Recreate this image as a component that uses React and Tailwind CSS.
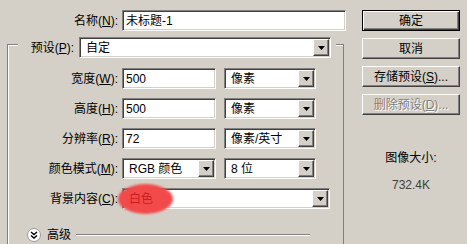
import React from "react"

const sunken =
  "bg-white border border-t-[#808080] border-l-[#808080] border-r-white border-b-white shadow-[inset_1px_1px_0_#404040,inset_-1px_-1px_0_#d4d0c8]"

function Label({ text, hot, rest = "):", className = "" }) {
  return (
    <div className={"text-right whitespace-nowrap " + className}>
      {text}(<span className="underline">{hot}</span>{rest}
    </div>
  )
}

function Input({ value, width }) {
  return (
    <div className={"h-[21px] flex items-center pl-[3px] " + sunken} style={{ width }}>
      {value}
    </div>
  )
}

function Arrow() {
  return (
    <div className="w-[16px] h-[17px] mt-[1px] mr-[1px] flex items-center justify-center bg-[#d4d0c8] border border-t-white border-l-white border-r-[#404040] border-b-[#404040] shadow-[inset_-1px_-1px_0_#808080]">
      <svg width="7" height="4" viewBox="0 0 7 4">
        <polygon points="0,0 7,0 3.5,4" fill="#000" />
      </svg>
    </div>
  )
}

function Select({ value, width, children }) {
  return (
    <div className={"h-[21px] flex items-start relative " + sunken} style={{ width }}>
      {children}
      <div className="flex-1 h-full flex items-center pl-[6px] relative z-10">{value}</div>
      <Arrow />
    </div>
  )
}

function Button({ children, def, disabled }) {
  const base =
    "w-[98px] h-[21px] flex items-center justify-center bg-[#d4d0c8] whitespace-nowrap"
  const edge = def
    ? " border border-black shadow-[inset_1px_1px_0_#fff,inset_-1px_-1px_0_#404040,inset_-2px_-2px_0_#808080]"
    : " border border-t-white border-l-white border-r-[#404040] border-b-[#404040] shadow-[inset_-1px_-1px_0_#808080]"
  return (
    <div className={base + edge + (disabled ? " text-[#808080] [text-shadow:1px_1px_0_#fff]" : "")}>
      {children}
    </div>
  )
}

export default function App() {
  return (
    <div className="w-[467px] h-[244px] bg-[#d4d0c8] flex overflow-hidden text-[12px] leading-none text-black font-['Liberation_Sans','Noto_Sans_CJK_SC',sans-serif]">
      {/* left side */}
      <div className="w-[350px] flex flex-col">
        <div className="mt-[10px] flex items-center h-[21px]">
          <Label text="名称" hot="N" className="w-[118px]" />
          <div className="ml-[4px]">
            <Input value="未标题-1" width={224} />
          </div>
        </div>

        <div className="mt-[13px] ml-[7px] w-[337px] flex-1 border-t border-l border-r border-[#808080] shadow-[inset_1px_1px_0_#fff] flex flex-col">
          {/* preset row sits on the frame */}
          <div className="-mt-[8px] ml-[10px] w-[318px] pl-[7px] bg-[#d4d0c8] flex items-center h-[21px]">
            <Label text="预设" hot="P" className="w-[49px]" />
            <div className="ml-[5px]">
              <Select value="自定" width={252} />
            </div>
          </div>

          <div className="mt-[10px] flex flex-col gap-[9px]">
            <div className="flex items-center h-[21px]">
              <Label text="宽度" hot="W" className="w-[110px]" />
              <div className="ml-[4px] flex gap-[8px]">
                <Input value="500" width={94} />
                <Select value="像素" width={92} />
              </div>
            </div>
            <div className="flex items-center h-[21px]">
              <Label text="高度" hot="H" className="w-[110px]" />
              <div className="ml-[4px] flex gap-[8px]">
                <Input value="500" width={94} />
                <Select value="像素" width={92} />
              </div>
            </div>
            <div className="flex items-center h-[21px]">
              <Label text="分辨率" hot="R" className="w-[110px]" />
              <div className="ml-[4px] flex gap-[8px]">
                <Input value="72" width={94} />
                <Select value="像素/英寸" width={92} />
              </div>
            </div>
            <div className="flex items-center h-[21px]">
              <Label text="颜色模式" hot="M" className="w-[110px]" />
              <div className="ml-[4px] flex gap-[8px]">
                <Select value="RGB 颜色" width={94} />
                <Select value="8 位" width={92} />
              </div>
            </div>
            <div className="flex items-center h-[21px]">
              <Label text="背景内容" hot="C" className="w-[110px]" />
              <div className="ml-[4px]">
                <Select value={<span className="text-[#c81e1e]">白色</span>} width={208}>
                  <div className="absolute -left-[5px] -top-[5px] w-[55px] h-[30px] rounded-[50%] bg-[#f24a4a] blur-[1px]" />
                </Select>
              </div>
            </div>
          </div>

          {/* advanced */}
          <div className="mt-[19px] ml-[19px] mr-[33px] flex items-center h-[14px]">
            <div className="w-[14px] h-[14px] rounded-full bg-white border border-[#9a9a9a] flex items-center justify-center">
              <svg width="8" height="8" viewBox="0 0 8 8" fill="none" stroke="#000" strokeWidth="1.4">
                <polyline points="1,1 4,3.5 7,1" />
                <polyline points="1,4.5 4,7 7,4.5" />
              </svg>
            </div>
            <div className="ml-[6px]">高级</div>
            <div className="ml-[5px] flex-1 h-[2px] border-t border-[#808080] border-b border-b-white" />
          </div>
        </div>
      </div>

      {/* right side */}
      <div className="ml-[12px] w-[98px] flex flex-col">
        <div className="mt-[10px] flex flex-col gap-[7px]">
          <Button def>确定</Button>
          <Button>取消</Button>
          <Button>
            存储预设(<span className="underline">S</span>)...
          </Button>
          <Button disabled>
            删除预设(<span className="underline">D</span>)...
          </Button>
        </div>
        <div className="mt-[37px] text-center">图像大小:</div>
        <div className="mt-[15px] text-center text-[#404040]">732.4K</div>
      </div>
    </div>
  )
}
